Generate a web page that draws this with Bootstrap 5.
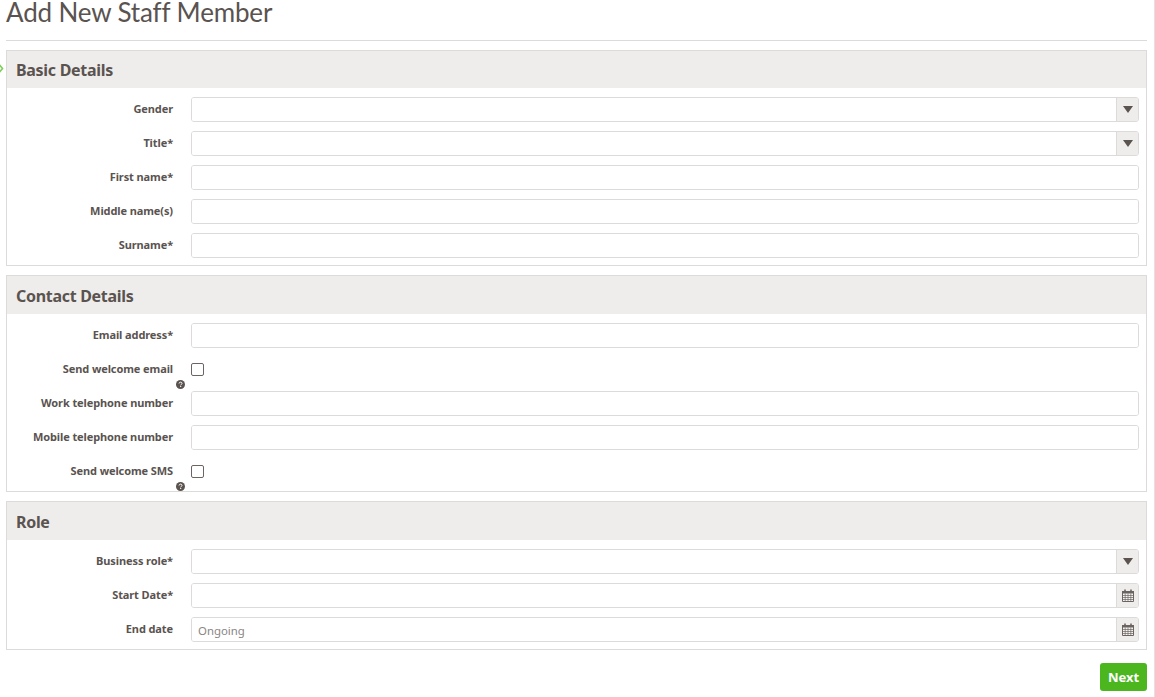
<!DOCTYPE html>
<html lang="en">
<head>
    <meta charset="UTF-8">
    <meta name="viewport" content="width=device-width, initial-scale=1.0">
    <title>Add New Staff Member</title>
    <link href="https://cdn.jsdelivr.net/npm/bootstrap@5.3.0/dist/css/bootstrap.min.css" rel="stylesheet">
    <style>
        html, body { height: 100%; overflow: hidden; }
        body { font-family: "Noto Sans", "Open Sans", sans-serif; color: #5a5350; background: #fff; }
        .page-wrap { padding: 0 7px 0 6px; position: relative; height: 697px; border-right: 1px solid #e4e2e0; width: 1155px; }
        .page-title { font-family: Lato, sans-serif; font-weight: 400; font-size: 26px; line-height: 24px; color: #5a5350; margin: 0; border-bottom: 1px solid #dddbd9; height: 41px; letter-spacing: -.15px; }
        .form-panel { border: 1px solid #dddbd9; margin-top: 9px; padding-bottom: 7px; }
        .panel-head { background: #efedeb; height: 37px; margin-bottom: 9px; padding-left: 9px; font-size: 16px; font-weight: 700; line-height: 38px; letter-spacing: -.3px; color: #5a5350; }
        .form-panel + .form-panel .panel-head { height: 38px; margin-bottom: 9px; line-height: 40px; }
        .field-row { display: flex; height: 25px; margin-bottom: 9px; }
        .field-row:last-child { margin-bottom: 0; }
        .field-label { width: 166px; flex: none; text-align: right; font-size: 11px; letter-spacing: -.1px; font-weight: 700; line-height: 23px; margin-right: 18px; white-space: nowrap; position: relative; }
        .field-box { flex: 1; margin-right: 7px; display: flex; border: 1px solid #dddbd9; border-radius: 3px; background: #fff; overflow: hidden; }
        .field-box input { border: 0; outline: 0; flex: 1; min-width: 0; padding: 3px 6px 0; font-size: 11.4px; color: #5a5350; font-family: "Noto Sans", sans-serif; }
        .field-box input::placeholder { color: #8a8583; opacity: 1; }
        .addon { width: 22px; flex: none; background: #efedeb; border-left: 1px solid #dddbd9; display: flex; align-items: center; justify-content: center; }
        .tick-box { width: 13px; height: 13px; margin-top: 6px; border: 1px solid #6b6461; border-radius: 2px; background: #fff; appearance: none; display: block; }
        .help-mark { position: absolute; right: -12px; top: 23px; width: 9px; height: 9px; }
        .btn-next { background: #4cb61f; border: 0; color: #fff; font-size: 13px; font-weight: 700; width: 47px; height: 28px; padding: 2px 0 0; border-radius: 3px; margin-top: 13px; }
        .btn-next:hover { background: #44a31c; color: #fff; }
        .edge-chevron { position: absolute; left: -3px; top: 62px; width: 7px; height: 13px; }
    </style>
</head>
<body>
    <div class="page-wrap">
        <svg class="edge-chevron" viewBox="0 0 7 13"><path d="M1 1l4.5 5.5L1 12" fill="none" stroke="#7ccf58" stroke-width="1.6"/></svg>
        <h1 class="page-title">Add New Staff Member</h1>

        <form id="staffForm">
            <div class="form-panel">
                <div class="panel-head">Basic Details</div>
                <div class="field-row"><label class="field-label">Gender</label><div class="field-box"><input type="text"><span class="addon"><svg width="10" height="7" viewBox="0 0 10 7"><path d="M0 0h10L5 7z" fill="#5a5350"/></svg></span></div></div>
                <div class="field-row"><label class="field-label">Title*</label><div class="field-box"><input type="text"><span class="addon"><svg width="10" height="7" viewBox="0 0 10 7"><path d="M0 0h10L5 7z" fill="#5a5350"/></svg></span></div></div>
                <div class="field-row"><label class="field-label">First name*</label><div class="field-box"><input type="text"></div></div>
                <div class="field-row"><label class="field-label">Middle name(s)</label><div class="field-box"><input type="text"></div></div>
                <div class="field-row"><label class="field-label">Surname*</label><div class="field-box"><input type="text"></div></div>
            </div>

            <div class="form-panel">
                <div class="panel-head">Contact Details</div>
                <div class="field-row"><label class="field-label">Email address*</label><div class="field-box"><input type="text"></div></div>
                <div class="field-row"><label class="field-label">Send welcome email
                    <svg class="help-mark" viewBox="0 0 10 10"><circle cx="5" cy="5" r="5" fill="#5a5350"/><path d="M3.4 3.9C3.5 2.9 4.2 2.4 5.1 2.4c1 0 1.6.6 1.6 1.3 0 1.2-1.5 1.1-1.5 2.2" fill="none" stroke="#fff" stroke-width="1.1"/><rect x="4.6" y="6.6" width="1.2" height="1.2" fill="#fff"/></svg></label><input type="checkbox" class="tick-box"></div>
                <div class="field-row"><label class="field-label">Work telephone number</label><div class="field-box"><input type="text"></div></div>
                <div class="field-row"><label class="field-label">Mobile telephone number</label><div class="field-box"><input type="text"></div></div>
                <div class="field-row"><label class="field-label">Send welcome SMS
                    <svg class="help-mark" viewBox="0 0 10 10"><circle cx="5" cy="5" r="5" fill="#5a5350"/><path d="M3.4 3.9C3.5 2.9 4.2 2.4 5.1 2.4c1 0 1.6.6 1.6 1.3 0 1.2-1.5 1.1-1.5 2.2" fill="none" stroke="#fff" stroke-width="1.1"/><rect x="4.6" y="6.6" width="1.2" height="1.2" fill="#fff"/></svg></label><input type="checkbox" class="tick-box"></div>
            </div>

            <div class="form-panel">
                <div class="panel-head">Role</div>
                <div class="field-row"><label class="field-label">Business role*</label><div class="field-box"><input type="text"><span class="addon"><svg width="10" height="7" viewBox="0 0 10 7"><path d="M0 0h10L5 7z" fill="#5a5350"/></svg></span></div></div>
                <div class="field-row"><label class="field-label">Start Date*</label><div class="field-box"><input type="text"><span class="addon"><svg width="12" height="13" viewBox="0 0 12 13"><path d="M.5 2.5h11v10H.5z" fill="#f6f5f4" stroke="#6b6461"/><path d="M0 2h12v2.5H0z" fill="#6b6461"/><path d="M3 .5v3M9 .5v3" stroke="#6b6461" stroke-width="1.6"/><path d="M.5 6.5h11M.5 8.5h11M.5 10.5h11M3.2 4.5v8M6 4.5v8M8.8 4.5v8" stroke="#6b6461" stroke-width=".7"/></svg></span></div></div>
                <div class="field-row"><label class="field-label">End date</label><div class="field-box"><input type="text" placeholder="Ongoing"><span class="addon"><svg width="12" height="13" viewBox="0 0 12 13"><path d="M.5 2.5h11v10H.5z" fill="#f6f5f4" stroke="#6b6461"/><path d="M0 2h12v2.5H0z" fill="#6b6461"/><path d="M3 .5v3M9 .5v3" stroke="#6b6461" stroke-width="1.6"/><path d="M.5 6.5h11M.5 8.5h11M.5 10.5h11M3.2 4.5v8M6 4.5v8M8.8 4.5v8" stroke="#6b6461" stroke-width=".7"/></svg></span></div></div>
            </div>

            <div class="d-flex justify-content-end">
                <button type="button" class="btn btn-next">Next</button>
            </div>
        </form>
    </div>
    <script src="https://cdn.jsdelivr.net/npm/bootstrap@5.3.0/dist/js/bootstrap.bundle.min.js"></script>
</body>
</html>
